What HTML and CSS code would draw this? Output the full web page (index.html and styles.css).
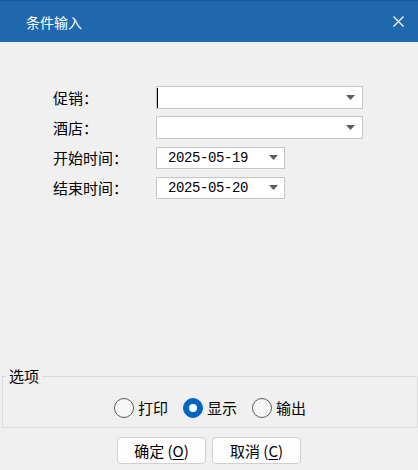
FILE: index.html
```html
<!DOCTYPE html>
<html lang="zh-CN">
<head>
<meta charset="utf-8">
<title>条件输入</title>
<link rel="stylesheet" href="styles.css">
</head>
<body>
<div class="window">
  <div class="titlebar">
    <span class="title">条件输入</span>
    <svg class="close" width="11" height="11" viewBox="0 0 11 11"><path d="M0.5 0.5 L10.5 10.5 M10.5 0.5 L0.5 10.5" stroke="#fff" stroke-width="1.2" fill="none"/></svg>
  </div>
  <div class="content">
    <div class="form">
      <div class="row">
        <span class="label">促销：</span>
        <div class="combo wide"><span class="caret"></span><svg class="arrow" width="9" height="5" viewBox="0 0 9 5"><polygon points="0,0 9,0 4.5,5" fill="#56605b"/></svg></div>
      </div>
      <div class="row">
        <span class="label">酒店：</span>
        <div class="combo wide"><span></span><svg class="arrow" width="9" height="5" viewBox="0 0 9 5"><polygon points="0,0 9,0 4.5,5" fill="#56605b"/></svg></div>
      </div>
      <div class="row">
        <span class="label">开始时间：</span>
        <div class="combo date"><span class="value">2025-05-19</span><svg class="arrow" width="9" height="5" viewBox="0 0 9 5"><polygon points="0,0 9,0 4.5,5" fill="#56605b"/></svg></div>
      </div>
      <div class="row">
        <span class="label">结束时间：</span>
        <div class="combo date"><span class="value">2025-05-20</span><svg class="arrow" width="9" height="5" viewBox="0 0 9 5"><polygon points="0,0 9,0 4.5,5" fill="#56605b"/></svg></div>
      </div>
    </div>
    <fieldset class="options">
      <legend>选项</legend>
      <div class="radios">
        <label class="radio"><span class="dot"></span>打印</label>
        <label class="radio"><span class="dot checked"></span>显示</label>
        <label class="radio"><span class="dot"></span>输出</label>
      </div>
    </fieldset>
    <div class="buttons">
      <div class="btn">确定 (<u>O</u>)</div>
      <div class="btn">取消 (<u>C</u>)</div>
    </div>
  </div>
</div>
</body>
</html>
```
FILE: styles.css
```css
html, body {
  margin: 0;
  padding: 0;
}
body {
  background: #f0f0f0;
  font-family: "Noto Sans CJK SC", "Noto Sans", sans-serif;
  color: #000;
}
.window {
  width: 418px;
  height: 470px;
  overflow: hidden;
  background: #f0f0f0;
}
.titlebar {
  height: 41px;
  border-top: 1px solid #17599a;
  background: #2068ae;
  display: flex;
  align-items: center;
  justify-content: space-between;
  padding: 0 14px 0 26px;
  color: #fff;
  font-size: 14px;
}
.close {
  display: block;
}
.content {
  height: 428px;
  display: flex;
  flex-direction: column;
}
.form {
  flex: 1;
  padding: 44px 0 0 53px;
  display: flex;
  flex-direction: column;
  gap: 7px;
}
.row {
  display: flex;
  align-items: center;
  height: 23px;
}
.label {
  width: 103px;
  font-size: 15px;
  line-height: 23px;
}
.combo {
  box-sizing: border-box;
  height: 23px;
  border: 1px solid #c6c6c6;
  background: #fff;
  display: flex;
  align-items: center;
  justify-content: space-between;
}
.combo.wide {
  width: 207px;
  padding: 0 7px 0 0;
}
.combo.date {
  width: 129px;
  height: 22px;
  padding: 0 6px 0 11px;
}
.caret {
  width: 1px;
  height: 20px;
  background: #000;
}
.value {
  font-family: "Liberation Mono", "DejaVu Sans Mono", monospace;
  font-size: 14px;
  letter-spacing: -0.4px;
  color: #000;
}
.arrow {
  display: block;
}
.options {
  margin: 0 0 0 2px;
  padding: 12px 0 9px;
  border: 1px solid #dadada;
  min-width: 0;
}
.options legend {
  margin-left: 3px;
  padding: 0 3px;
  font-size: 15px;
  line-height: 20px;
}
.radios {
  display: flex;
  justify-content: center;
  align-items: center;
  gap: 15px;
  height: 20px;
}
.radio {
  display: flex;
  align-items: center;
  gap: 4px;
  font-size: 15px;
  line-height: 20px;
}
.dot {
  box-sizing: border-box;
  width: 20px;
  height: 20px;
  border: 1px solid #5d5d5d;
  border-radius: 50%;
  background: #f7f7f7;
  display: flex;
  align-items: center;
  justify-content: center;
}
.dot.checked {
  background: #0067c0;
  border-color: #0067c0;
}
.dot.checked::after {
  content: "";
  width: 8px;
  height: 8px;
  border-radius: 50%;
  background: #fff;
}
.buttons {
  display: flex;
  justify-content: center;
  gap: 6px;
  padding: 9px 0 6px;
}
.btn {
  box-sizing: border-box;
  width: 89px;
  height: 27px;
  border: 1px solid #d0d0d0;
  border-radius: 4px;
  background: #fdfdfd;
  font-size: 15px;
  display: flex;
  align-items: center;
  justify-content: center;
  white-space: pre;
}
.btn u {
  text-underline-offset: 2px;
}
```
